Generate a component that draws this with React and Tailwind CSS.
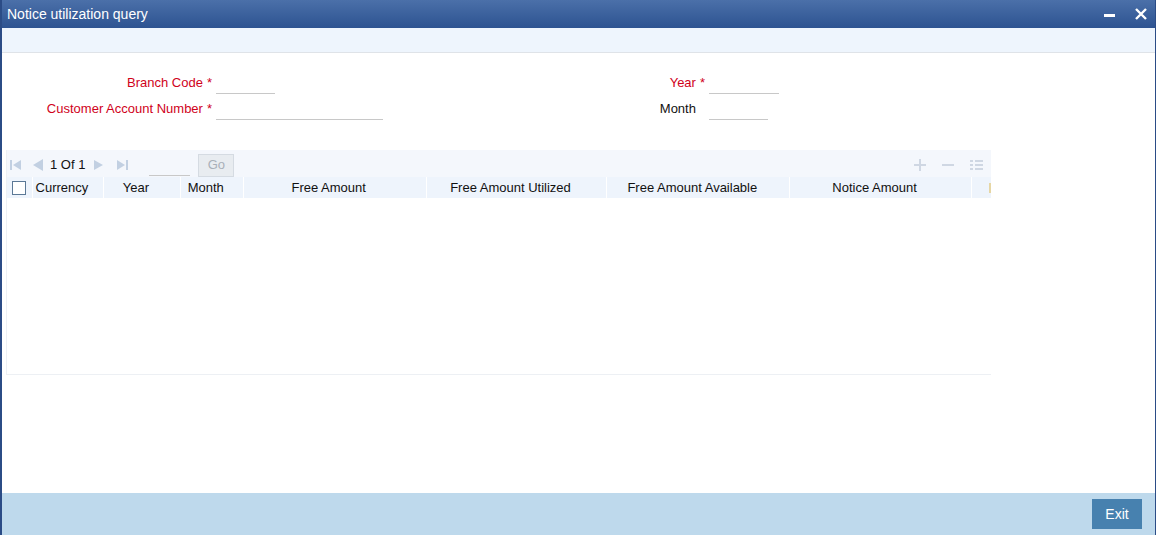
import React from 'react';

const font = { fontFamily: '"Liberation Sans", Arial, sans-serif' };

const columns = [
  { label: 'Currency', w: 'w-[71px]' },
  { label: 'Year', w: 'w-[77px]' },
  { label: 'Month', w: 'w-[63px]' },
  { label: 'Free Amount', w: 'w-[183px]' },
  { label: 'Free Amount Utilized', w: 'w-[181px]' },
  { label: 'Free Amount Available', w: 'w-[183px]' },
  { label: 'Notice Amount', w: 'w-[182px]' },
];

const Req = () => <span className="ml-[4px] text-[#d0021b]">*</span>;

const Field = ({ label, required, inputW, labelW }) => (
  <div className="flex items-center h-[26px]">
    <div className={`${labelW} text-right pr-[2px] ${required ? 'text-[#d0021b]' : 'text-[#111]'}`}>
      {label}
      {required ? <Req /> : <span className="ml-[4px] invisible">*</span>}
    </div>
    <div className={`${inputW} h-[22px] ml-[2px] border-b border-[#c8c8c8]`} />
  </div>
);

const NavIcon = ({ kind }) => (
  <svg width="12" height="12" viewBox="0 0 12 12" fill="#c2d0e2">
    {kind === 'first' && (
      <>
        <rect x="0" y="1" width="2" height="10" />
        <path d="M11 1 L3 6 L11 11 Z" />
      </>
    )}
    {kind === 'prev' && <path d="M11 0 L1 6 L11 12 Z" />}
    {kind === 'next' && <path d="M1 1 L10 6 L1 11 Z" />}
    {kind === 'last' && (
      <>
        <path d="M0 1 L8 6 L0 11 Z" />
        <rect x="9" y="1" width="2" height="10" />
      </>
    )}
  </svg>
);

export default function App() {
  return (
    <div className="w-[1156px] h-[541px] bg-white text-[13px]" style={font}>
      <div className="h-[535px] flex flex-col border-l-2 border-r border-[#2b4c86]">
        {/* title bar */}
        <div className="h-[28px] flex items-center justify-between pl-[5px] pr-[8px] bg-gradient-to-b from-[#4b70a9] to-[#2d5391] text-white text-[14px]">
          <span>Notice utilization query</span>
          <div className="flex items-center gap-[20px]">
            <svg width="11" height="11" viewBox="0 0 11 11">
              <rect x="0" y="5" width="11" height="3" fill="#fff" />
            </svg>
            <svg width="12" height="12" viewBox="0 0 12 12" stroke="#fff" strokeWidth="2.4">
              <path d="M1 1 L11 11 M11 1 L1 11" />
            </svg>
          </div>
        </div>
        <div className="h-[25px] bg-[#eef5fd] border-b border-[#dfe3e8]" />

        {/* body */}
        <div className="flex-1 pt-[17px]">
          <div className="flex">
            <div className="flex flex-col">
              <Field label="Branch Code" required labelW="w-[212px]" inputW="w-[59px]" />
              <Field label="Customer Account Number" required labelW="w-[212px]" inputW="w-[167px]" />
            </div>
            <div className="flex flex-col ml-[112px]">
              <Field label="Year" required labelW="w-[212px]" inputW="w-[70px]" />
              <Field label="Month" labelW="w-[212px]" inputW="w-[59px]" />
            </div>
          </div>

          {/* grid */}
          <div className="mt-[28px] ml-[4px] w-[985px] h-[225px] border-l border-b border-[#edf0f4] flex flex-col">
            <div className="h-[27px] bg-[#f4f7fc] flex items-center pt-[3px] pl-[3px] pr-[8px]">
              <NavIcon kind="first" />
              <span className="ml-[10px]"><NavIcon kind="prev" /></span>
              <span className="ml-[6px] text-[#111]">1 Of 1</span>
              <span className="ml-[8px]"><NavIcon kind="next" /></span>
              <span className="ml-[12px]"><NavIcon kind="last" /></span>
              <div className="ml-[20px] w-[41px] h-[22px] border-b border-[#c8c8c8]" />
              <div className="ml-[8px] w-[36px] h-[23px] bg-[#e8ecf0] border border-[#d5dbe2] flex items-center justify-center text-[#a8b0b9]">
                Go
              </div>
              <div className="ml-auto flex items-center gap-[16px] text-[#cfd7e3]">
                <svg width="12" height="12" viewBox="0 0 12 12" stroke="#cfd7e3" strokeWidth="2">
                  <path d="M6 0 V12 M0 6 H12" />
                </svg>
                <svg width="12" height="12" viewBox="0 0 12 12" stroke="#cfd7e3" strokeWidth="2">
                  <path d="M0 6 H12" />
                </svg>
                <svg width="13" height="12" viewBox="0 0 13 12" fill="#cfd7e3">
                  <rect x="0" y="1" width="3" height="2" />
                  <rect x="5" y="1" width="8" height="2" />
                  <rect x="0" y="5" width="3" height="2" />
                  <rect x="5" y="5" width="8" height="2" />
                  <rect x="0" y="9" width="3" height="2" />
                  <rect x="5" y="9" width="8" height="2" />
                </svg>
              </div>
            </div>
            <div className="h-[21px] flex bg-[#eef4fc] text-[#111]">
              <div className="w-[26px] flex items-center justify-center border-r border-white">
                <div className="w-[14px] h-[14px] bg-white border border-[#5b7896]" />
              </div>
              {columns.map((c) => (
                <div key={c.label} className={`${c.w} flex items-center justify-center pr-[12px] border-r border-white`}>
                  {c.label}
                </div>
              ))}
              <div className="w-[19px] flex items-center justify-end">
                <div className="w-[2px] h-[10px] bg-[#e6d6a4]" />
              </div>
            </div>
            <div className="flex-1" />
          </div>
        </div>

        {/* footer */}
        <div className="h-[42px] bg-[#bed9ec] flex items-center justify-end pr-[13px]">
          <div className="w-[50px] h-[30px] bg-[#4781af] text-white text-[14px] flex items-center justify-center">
            Exit
          </div>
        </div>
      </div>
    </div>
  );
}
